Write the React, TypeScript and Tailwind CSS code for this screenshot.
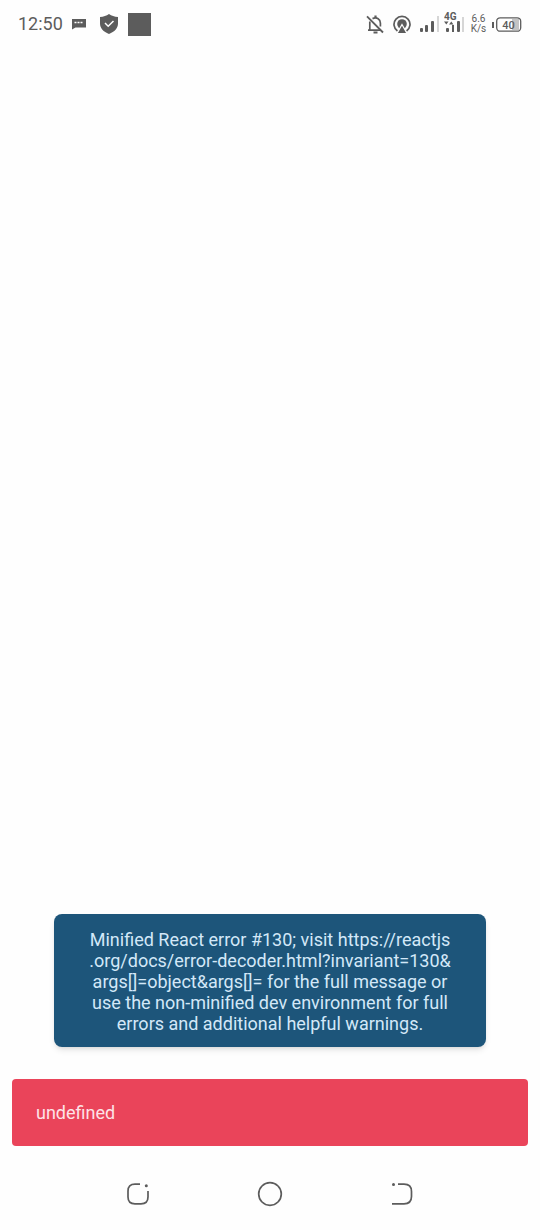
import type { ReactNode } from "react";

const ERROR_LINES = [
  "Minified React error #130; visit https://reactjs",
  ".org/docs/error-decoder.html?invariant=130&",
  "args[]=object&args[]= for the full message or",
  "use the non-minified dev environment for full",
  "errors and additional helpful warnings.",
];

function ChatIcon() {
  return (
    <svg width="15" height="12" viewBox="0 0 15 12" aria-hidden="true">
      <path d="M1 1h14v8.500H4.500L1 11.500z" fill="#5c5c5c" />
      <path d="M3.500 4.500h2M6.500 4.500h2M9.500 4.500h2" stroke="#fff" strokeWidth="1.300" />
    </svg>
  );
}

function ShieldIcon() {
  return (
    <svg width="18" height="20" viewBox="0 0 18 20" aria-hidden="true">
      <path
        d="M9 0c2.600 1.800 5.400 2.700 9 3v6.500c0 4.800-3.400 8.300-9 10.500C3.400 17.800 0 14.300 0 9.500V3c3.600-.3 6.400-1.200 9-3z"
        fill="#5c5c5c"
      />
      <path d="M5 9l3.200 3.200L13.500 7" fill="none" stroke="#fff" strokeWidth="1.500" />
    </svg>
  );
}

function BellOffIcon() {
  return (
    <svg width="18" height="19" viewBox="0 0 18 19" fill="none" stroke="#5c5c5c" aria-hidden="true">
      <path d="M3.800 6.500V15M2 15.200h12.500M6.500 3.600C11 1.600 14.400 4.500 14.400 8v3.500" strokeWidth="1.700" />
      <path d="M9.500 0.500v2.500" strokeWidth="2.200" />
      <path d="M7.500 17.500h4" strokeWidth="2" />
      <path d="M1 1.300l16 16.200" strokeWidth="1.800" />
    </svg>
  );
}

function HotspotIcon() {
  return (
    <svg width="18" height="19" viewBox="0 0 18 19" aria-hidden="true">
      <path d="M4.500 16A8 8 0 1 1 13.500 16" fill="none" stroke="#5c5c5c" strokeWidth="1.700" />
      <circle cx="9" cy="9" r="4.800" fill="#5c5c5c" />
      <path d="M9 9.500l5 9H4z" fill="#5c5c5c" stroke="#fefefe" strokeWidth="1.200" />
    </svg>
  );
}

function SignalIcon() {
  return (
    <svg width="20" height="16" viewBox="0 0 20 16" fill="#5c5c5c" aria-hidden="true">
      <rect x="0" y="12" width="3" height="4" rx="1" />
      <rect x="5" y="9" width="3" height="7" rx="1" />
      <rect x="11" y="5" width="3" height="11" rx="1" />
      <rect x="17" y="0" width="2" height="16" fill="#d6d6d6" />
    </svg>
  );
}

function MobileSignalIcon() {
  return (
    <svg width="21" height="21" viewBox="0 0 21 21" fill="#5c5c5c" aria-hidden="true">
      <text x="0" y="8" className="font-['Roboto'] text-[10px] font-bold">
        4G
      </text>
      <path d="M0 9.500h4.500l-2.200 3zM5 12.500h4.500l-2.200-3z" />
      <rect x="2" y="16" width="3" height="4" rx="1" />
      <rect x="8" y="13" width="2" height="7" />
      <rect x="13" y="9" width="3" height="11" rx="1" />
      <rect x="18" y="5" width="2" height="15" fill="#d6d6d6" />
    </svg>
  );
}

function BatteryIcon() {
  return (
    <svg width="30" height="15" viewBox="0 0 30 15" aria-hidden="true">
      <rect x="0" y="5" width="2" height="6" fill="#5c5c5c" />
      <rect x="20" y="2" width="7" height="11" fill="#c4c4c4" />
      <rect
        x="4.700"
        y="0.800"
        width="24"
        height="13.400"
        rx="3.500"
        fill="none"
        stroke="#5c5c5c"
        strokeWidth="1.300"
      />
      <text
        x="16.500"
        y="11.500"
        textAnchor="middle"
        fill="#5c5c5c"
        className="font-['Roboto'] text-[11px] font-medium"
      >
        40
      </text>
    </svg>
  );
}

function StatusBar() {
  return (
    <header className="flex h-12 items-center justify-between px-[18px] text-[#5c5c5c]">
      <div className="flex items-center">
        <span className="text-lg">12:50</span>
        <div className="ml-2 flex items-center gap-3.5">
          <ChatIcon />
          <div className="flex items-center gap-2.5">
            <ShieldIcon />
            <div className="h-[23px] w-[23px] bg-[#5c5c5c]" />
          </div>
        </div>
      </div>
      <div className="flex items-center">
        <div className="flex items-center gap-[9px]">
          <BellOffIcon />
          <HotspotIcon />
          <SignalIcon />
        </div>
        <div className="ml-1 pb-1">
          <MobileSignalIcon />
        </div>
        <div className="mx-[5px] w-[17px] text-center text-[10px] leading-[10px]">
          <div>6.6</div>
          <div>K/s</div>
        </div>
        <BatteryIcon />
      </div>
    </header>
  );
}

function Toast() {
  return (
    <div
      role="alert"
      className="mx-[54px] rounded-lg bg-[#1d557a] pt-[15px] pb-[13px] text-center text-lg leading-[21px] text-[#d3e8f8] shadow-md"
    >
      {ERROR_LINES.map((line) => (
        <div key={line}>{line}</div>
      ))}
    </div>
  );
}

function Snackbar() {
  return (
    <div
      role="status"
      className="mx-3 mt-8 mb-3 rounded bg-[#ea445a] px-6 py-[23px] text-lg leading-[21px] text-[#fde3e7]"
    >
      undefined
    </div>
  );
}

function NavButton({ label, children }: { label: string; children: ReactNode }) {
  return (
    <button type="button" aria-label={label} className="flex w-[132px] justify-center">
      <svg width="26" height="26" viewBox="0 0 26 26" fill="none" stroke="#5c5c5c" strokeWidth="1.700">
        {children}
      </svg>
    </button>
  );
}

function NavBar() {
  return (
    <nav className="flex h-[72px] items-center justify-center">
      <NavButton label="Recent apps">
        <path d="M15 3.200H10Q3 3.200 3 10V16Q3 22.800 10 22.800H16Q23 22.800 23 16V10" />
        <circle cx="21.300" cy="4.700" r="1.500" fill="#5c5c5c" stroke="none" />
      </NavButton>
      <NavButton label="Home">
        <circle cx="13" cy="13" r="11.300" />
      </NavButton>
      <NavButton label="Back">
        <path d="M9 3.200H15Q22.500 3.200 22.500 10.500V15.500Q22.500 22.800 15 22.800H3" />
        <circle cx="4.500" cy="3.400" r="1.500" fill="#5c5c5c" stroke="none" />
      </NavButton>
    </nav>
  );
}

export default function App() {
  return (
    <div className="flex min-h-screen flex-col bg-[#fefefe] font-['Roboto',sans-serif]">
      <StatusBar />
      <main className="flex flex-1 flex-col justify-end">
        <Toast />
        <Snackbar />
      </main>
      <NavBar />
    </div>
  );
}
